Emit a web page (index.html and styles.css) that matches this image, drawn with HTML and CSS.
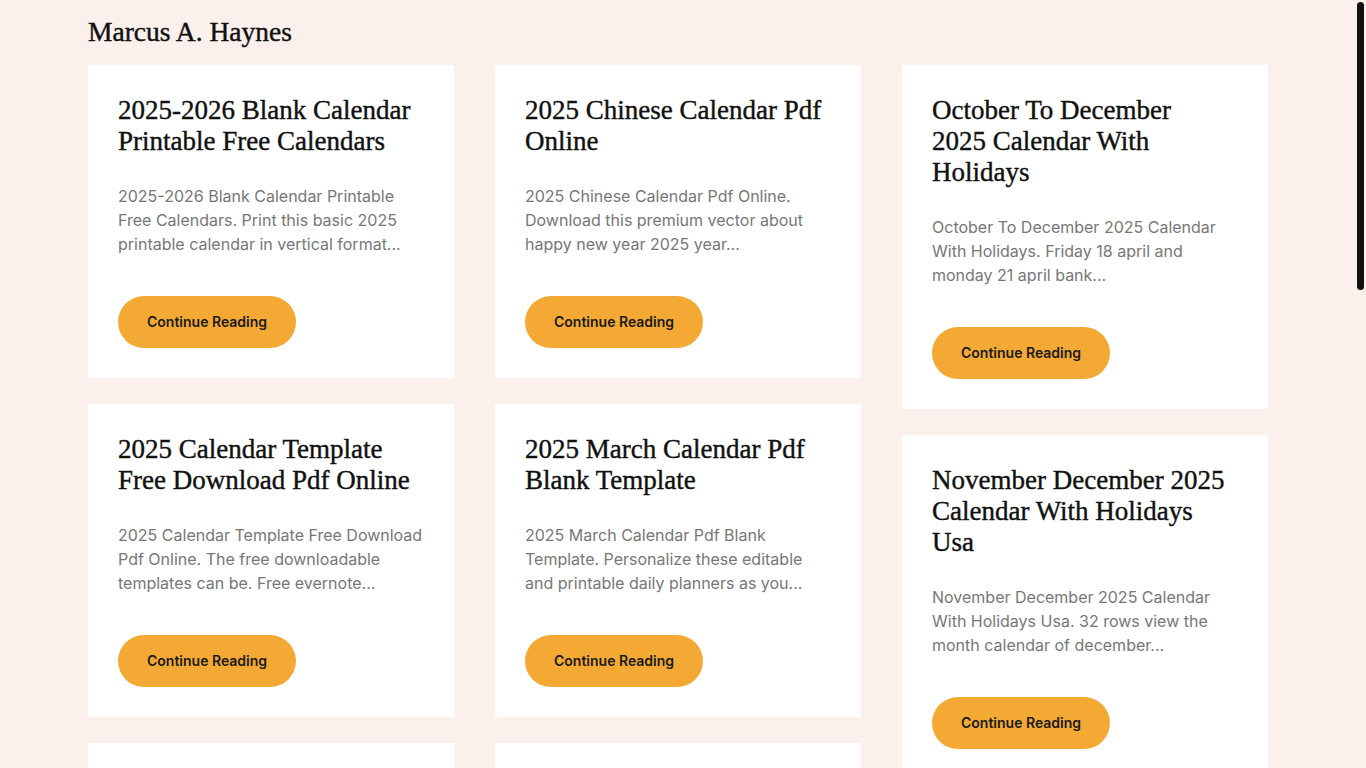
FILE: index.html
```html
<!DOCTYPE html>
<html lang="en">
<head>
    <meta charset="UTF-8">
    <meta name="viewport" content="width=device-width, initial-scale=1.0">
    <title>Marcus A. Haynes</title>
    <link rel="stylesheet" href="styles.css">
</head>
<body>
    <div class="container">
        <header class="site-header">
            <a class="site-title" href="#">Marcus A. Haynes</a>
        </header>

        <main class="posts">
            <div class="posts-col">
                <article class="card">
                    <h2 class="card-title">2025-2026 Blank Calendar Printable Free Calendars</h2>
                    <p class="card-excerpt">2025-2026 Blank Calendar Printable Free Calendars. Print this basic 2025 printable calendar in vertical format...</p>
                    <a class="btn" href="#">Continue Reading</a>
                </article>
                <article class="card">
                    <h2 class="card-title">2025 Calendar Template Free Download Pdf Online</h2>
                    <p class="card-excerpt">2025 Calendar Template Free Download Pdf Online. The free downloadable templates can be. Free evernote...</p>
                    <a class="btn" href="#">Continue Reading</a>
                </article>
                <article class="card">
                    <h2 class="card-title">2025 Yearly Calendar Printable With Week Numbers</h2>
                    <p class="card-excerpt">2025 Yearly Calendar Printable With Week Numbers. Get your free printable yearly planner for the new year...</p>
                    <a class="btn" href="#">Continue Reading</a>
                </article>
                <article class="card">
                    <h2 class="card-title">Free Printable Monthly Calendar 2025 Pdf</h2>
                    <p class="card-excerpt">Free Printable Monthly Calendar 2025 Pdf. These calendars are great for planning your month ahead...</p>
                    <a class="btn" href="#">Continue Reading</a>
                </article>
                <article class="card">
                    <h2 class="card-title">2025 Academic Calendar Template Word</h2>
                    <p class="card-excerpt">2025 Academic Calendar Template Word. Edit and print your own school year calendar in minutes...</p>
                    <a class="btn" href="#">Continue Reading</a>
                </article>
            </div>

            <div class="posts-col">
                <article class="card">
                    <h2 class="card-title">2025 Chinese Calendar Pdf Online</h2>
                    <p class="card-excerpt">2025 Chinese Calendar Pdf Online. Download this premium vector about happy new year 2025 year...</p>
                    <a class="btn" href="#">Continue Reading</a>
                </article>
                <article class="card">
                    <h2 class="card-title">2025 March Calendar Pdf Blank Template</h2>
                    <p class="card-excerpt">2025 March Calendar Pdf Blank Template. Personalize these editable and printable daily planners as you...</p>
                    <a class="btn" href="#">Continue Reading</a>
                </article>
                <article class="card">
                    <h2 class="card-title">January 2025 Calendar Printable Free Pdf</h2>
                    <p class="card-excerpt">January 2025 Calendar Printable Free Pdf. Start the year organized with this simple monthly layout...</p>
                    <a class="btn" href="#">Continue Reading</a>
                </article>
                <article class="card">
                    <h2 class="card-title">2025 Weekly Planner Template Printable</h2>
                    <p class="card-excerpt">2025 Weekly Planner Template Printable. Keep track of tasks, goals and appointments every week...</p>
                    <a class="btn" href="#">Continue Reading</a>
                </article>
                <article class="card">
                    <h2 class="card-title">Printable 2025 Calendar One Page</h2>
                    <p class="card-excerpt">Printable 2025 Calendar One Page. A full year at a glance on a single sheet of paper...</p>
                    <a class="btn" href="#">Continue Reading</a>
                </article>
            </div>

            <div class="posts-col">
                <article class="card">
                    <h2 class="card-title">October To December 2025 Calendar With Holidays</h2>
                    <p class="card-excerpt">October To December 2025 Calendar With Holidays. Friday 18 april and monday 21 april bank...</p>
                    <a class="btn" href="#">Continue Reading</a>
                </article>
                <article class="card">
                    <h2 class="card-title">November December 2025 Calendar With Holidays Usa</h2>
                    <p class="card-excerpt">November December 2025 Calendar With Holidays Usa. 32 rows view the month calendar of december...</p>
                    <a class="btn" href="#">Continue Reading</a>
                </article>
                <article class="card">
                    <h2 class="card-title">2025 Holiday Calendar Printable Free</h2>
                    <p class="card-excerpt">2025 Holiday Calendar Printable Free. All federal holidays and observances marked for the year...</p>
                    <a class="btn" href="#">Continue Reading</a>
                </article>
                <article class="card">
                    <h2 class="card-title">September 2025 Calendar Printable Template</h2>
                    <p class="card-excerpt">September 2025 Calendar Printable Template. Plan the back to school season with this free sheet...</p>
                    <a class="btn" href="#">Continue Reading</a>
                </article>
            </div>
        </main>
    </div>

    <div class="scroll-thumb"></div>
</body>
</html>
```

FILE: styles.css
```css
html {
    background-color: #fbf0eb;
}

body {
    margin: 0;
    padding: 0 10px 0 0; /* room for the scroll indicator */
    font-family: Inter, "Liberation Sans", sans-serif;
    background-color: #fbf0eb;
    color: #111111;
}

.scroll-thumb {
    position: fixed;
    top: 2px;
    right: 2px;
    width: 7px;
    height: 288px;
    background-color: #111111;
    border-radius: 4px;
}

.container {
    max-width: 1180px;
    margin: 0 auto; /* center the content */
}

.site-header {
    padding: 16px 0 17px;
}

.site-title {
    font-family: "Liberation Serif", "DejaVu Serif", serif;
    font-size: 27.5px;
    line-height: 32px;
    font-weight: 400;
    -webkit-text-stroke: 0.4px #111111;
    color: #111111;
    text-decoration: none;
}

.posts {
    display: grid;
    grid-template-columns: repeat(3, 1fr);
    column-gap: 41px;
    align-items: start;
}

.posts-col {
    display: flex;
    flex-direction: column;
    gap: 26px;
}

.card {
    background-color: #ffffff;
    padding: 30px;
}

.card-title {
    font-family: "Liberation Serif", "DejaVu Serif", serif;
    font-size: 27px;
    line-height: 31px;
    font-weight: 400;
    -webkit-text-stroke: 0.4px #111111;
    color: #111111;
    margin: 0 0 27px;
    padding-right: 8px; /* keeps line breaks like the original face */
}

.card-excerpt {
    font-size: 16px;
    line-height: 24px;
    color: #777777;
    margin: 0 0 40px;
}

.btn {
    display: inline-block;
    padding: 16px 29px;
    font-size: 14px;
    line-height: 20px;
    font-weight: 600;
    color: #1a1a1a;
    background-color: #f5a935;
    border-radius: 26px;
    text-decoration: none;
}
```
